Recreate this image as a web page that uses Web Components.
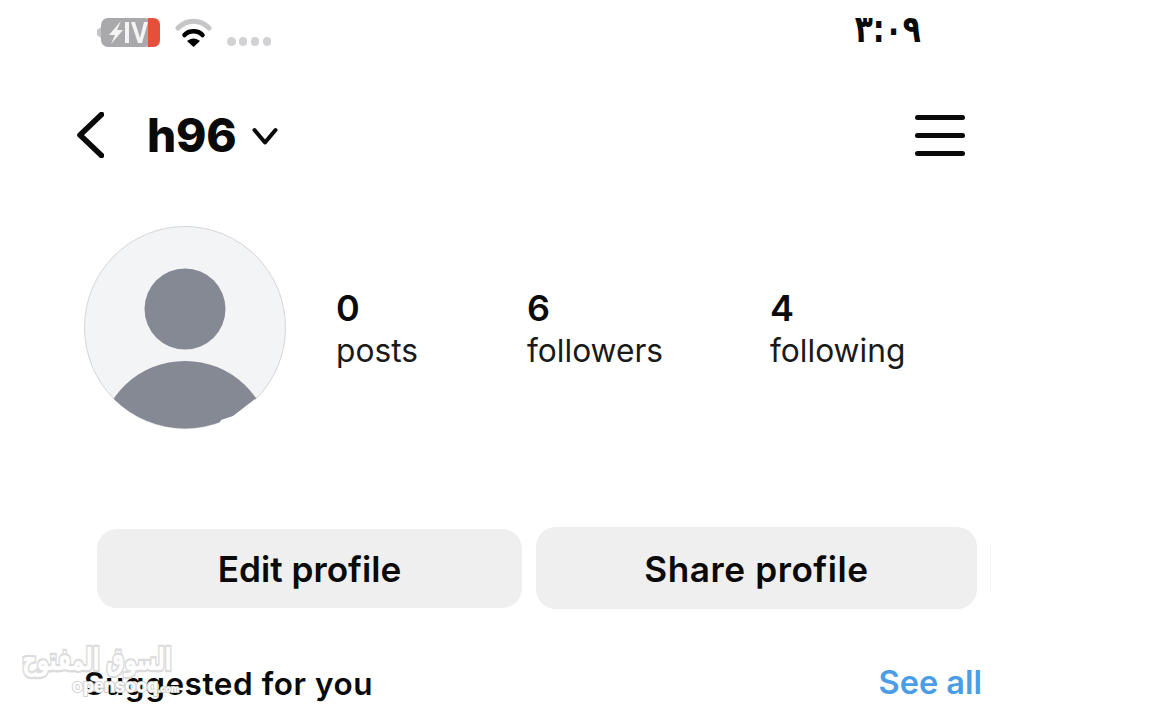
<!DOCTYPE html>
<html>
<head>
<meta charset="utf-8">
<style>
html, body { margin: 0; padding: 0; background: #fff; }
body { width: 1163px; height: 720px; overflow: hidden; position: relative; font-family: Inter, "Liberation Sans", sans-serif; color: #0a0a0a; }
</style>
</head>
<body>
<status-bar></status-bar>
<profile-header name="h96"></profile-header>
<profile-summary>
  <profile-stat n="0" label="posts" style="width:191px"></profile-stat>
  <profile-stat n="6" label="followers" style="width:243px"></profile-stat>
  <profile-stat n="4" label="following"></profile-stat>
</profile-summary>
<profile-actions></profile-actions>
<suggested-row></suggested-row>
<site-watermark></site-watermark>

<script>
function shadow(el, html) {
  el.attachShadow({ mode: 'open' }).innerHTML = html;
}

class StatusBar extends HTMLElement {
  connectedCallback() {
    shadow(this, `
<style>
:host { display: flex; height: 60px; box-sizing: border-box; padding: 15px 242px 0 97px; align-items: flex-start; }
.bat { display: block; margin-top: 2px; }
.wifi { display: block; margin: 2px 0 0 15px; }
.dots { display: flex; gap: 3.4px; margin: 22px 0 0 15px; }
.dots i { width: 8.5px; height: 8.5px; border-radius: 50%; background: #d2d2d4; }
.time { margin: -5px 0 0 auto; font: bold 38px/38px "DejaVu Sans", sans-serif; color: #0a0a0a; direction: ltr; transform: scaleX(0.78); transform-origin: right center; }
</style>
<svg class="bat" width="63" height="31" viewBox="0 0 63 31">
  <path d="M4 10 L0 13 V18 L4 21 Z" fill="#c4c4c6"/>
  <rect x="4" y="1" width="51" height="29" rx="7" fill="#a9a9ab"/>
  <path d="M51 1 H56 Q63 1 63 8 V23 Q63 30 56 30 H51 Z" fill="#e5503a"/>
  <path d="M24 4 L12 18 H18 L14 27 L26 13 H20 Z" fill="#f4f4f4"/>
  <path d="M28 5 H32 V26 H28 Z" fill="#f4f4f4"/>
  <path d="M34 5 H38 L43 21 L47 5 H51 L45 26 H41 Z" fill="#f4f4f4"/>
</svg>
<svg class="wifi" width="37" height="31" viewBox="0 0 37 31">
  <path d="M3 11 C12 2 25 2 34 11" fill="none" stroke="#c6c6c8" stroke-width="5" stroke-linecap="round"/>
  <path d="M9.5 18 C14 13 23 13 27.5 18" fill="none" stroke="#000" stroke-width="4.5" stroke-linecap="round"/>
  <path d="M18.5 30 L12 24 C16 20.5 21 20.5 25 24 Z" fill="#000"/>
</svg>
<div class="dots"><i></i><i></i><i></i><i></i></div>
<div class="time">٣:٠٩</div>`);
  }
}

class ProfileHeader extends HTMLElement {
  connectedCallback() {
    shadow(this, `
<style>
:host { display: flex; align-items: center; height: 90px; margin-top: 30px; box-sizing: border-box; padding: 0 198px 0 77px; }
.name { margin-left: 43px; font-size: 46px; font-weight: 800; line-height: 50px; letter-spacing: -0.2px; }
.down { margin: 2px 0 0 15px; display: block; }
.menu { margin-left: auto; display: flex; flex-direction: column; gap: 13px; }
.menu i { display: block; width: 50px; height: 5px; border-radius: 2.5px; background: #0a0a0a; }
</style>
<svg width="27" height="46" viewBox="0 0 27 46" style="display:block">
  <path d="M24.5 2.5 L3 23 L24.5 43.5" fill="none" stroke="#0a0a0a" stroke-width="5.6" stroke-linecap="round" stroke-linejoin="round"/>
</svg>
<span class="name">${this.getAttribute('name')}</span>
<svg class="down" width="26" height="19" viewBox="0 0 26 19">
  <path d="M2.5 3 L13 15.5 L23.5 3" fill="none" stroke="#0a0a0a" stroke-width="4" stroke-linecap="round" stroke-linejoin="round"/>
</svg>
<div class="menu"><i></i><i></i><i></i></div>`);
  }
}

class ProfileStat extends HTMLElement {
  connectedCallback() {
    shadow(this, `
<style>
:host { display: block; }
.n { font-size: 36px; font-weight: 600; line-height: 42px; }
.l { font-size: 31.7px; font-weight: 400; line-height: 38px; margin-top: 3px; color: #1a1a1a; }
</style>
<div class="n">${this.getAttribute('n')}</div>
<div class="l">${this.getAttribute('label')}</div>`);
  }
}

class ProfileSummary extends HTMLElement {
  connectedCallback() {
    shadow(this, `
<style>
:host { display: flex; align-items: flex-start; margin-top: 46px; padding-left: 84px; }
svg { display: block; flex: none; }
.stats { display: flex; margin: 61px 0 0 50px; }
</style>
<svg width="202" height="204" viewBox="0 0 202 204">
  <defs><clipPath id="c"><ellipse cx="101" cy="101.5" rx="100.5" ry="101"/></clipPath></defs>
  <ellipse cx="101" cy="101.5" rx="100.5" ry="101" fill="#f3f4f6" stroke="#d4d5d8" stroke-width="1"/>
  <g clip-path="url(#c)" fill="#858993">
    <circle cx="101" cy="83" r="40.5"/>
    <ellipse cx="101" cy="215" rx="84" ry="80"/>
  </g>
  <path d="M133 203 L137 194 L149 190 L171 173 L190 190 L170 204 Z" fill="#fff"/>
</svg>
<div class="stats"><slot></slot></div>`);
  }
}

class ActionButton extends HTMLElement {
  connectedCallback() {
    shadow(this, `
<style>
:host { display: flex; align-items: center; justify-content: center; box-sizing: border-box; padding-top: 2px; background: #efefef; border-radius: 20px; font-size: 35.2px; font-weight: 600; color: #0a0a0a; }
</style>
<slot></slot>`);
  }
}

class ProfileActions extends HTMLElement {
  connectedCallback() {
    shadow(this, `
<style>
:host { display: flex; align-items: center; margin-top: 97px; padding-left: 97px; height: 82px; }
.edit { width: 425px; height: 79px; }
.share { width: 441px; height: 82px; margin-left: 14px; letter-spacing: 0.55px; }
.sliver { width: 1px; height: 50px; margin-left: 13px; background: #f4f4f4; }
</style>
<action-button class="edit">Edit profile</action-button>
<action-button class="share">Share profile</action-button>
<div class="sliver"></div>`);
  }
}

class SuggestedRow extends HTMLElement {
  connectedCallback() {
    shadow(this, `
<style>
:host { display: flex; justify-content: space-between; align-items: center; margin-top: 54px; padding: 0 181px 0 84px; height: 40px; font-size: 31.5px; font-weight: 600; letter-spacing: 0.55px; }
.all { color: #4a9de6; font-size: 32.5px; letter-spacing: 0; margin-top: -2px; }
</style>
<span>Suggested for you</span>
<span class="all">See all</span>`);
  }
}

class SiteWatermark extends HTMLElement {
  connectedCallback() {
    shadow(this, `
<style>
:host { position: absolute; left: 22px; top: 644px; width: 150px; color: #fff; }
.ar { font: bold 20px/30px "DejaVu Sans", sans-serif; white-space: nowrap; direction: rtl; text-align: center; -webkit-text-stroke: 3px #dcdcdc; paint-order: stroke fill; transform: scaleY(1.5); }
.en { font: 700 18px/20px "Liberation Sans", sans-serif; white-space: nowrap; margin: 2px 0 0 50px; -webkit-text-stroke: 2px #d0d0d0; paint-order: stroke fill; }
.en small { font-size: 9px; }
</style>
<div class="ar">السوق المفتوح</div>
<div class="en">opensooq<small>.com</small></div>`);
  }
}

customElements.define('status-bar', StatusBar);
customElements.define('profile-header', ProfileHeader);
customElements.define('profile-stat', ProfileStat);
customElements.define('profile-summary', ProfileSummary);
customElements.define('action-button', ActionButton);
customElements.define('profile-actions', ProfileActions);
customElements.define('suggested-row', SuggestedRow);
customElements.define('site-watermark', SiteWatermark);
</script>
</body>
</html>
